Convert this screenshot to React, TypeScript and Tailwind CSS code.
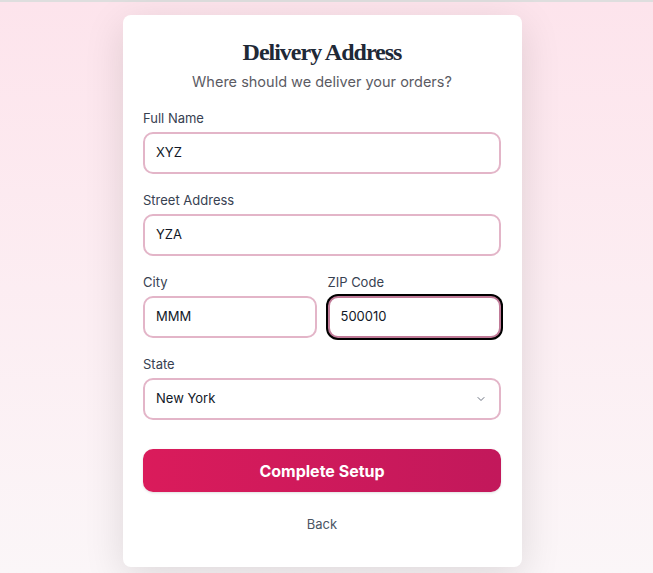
import React from "react";

function Field({ label, value, focus }: { label: string; value: string; focus?: boolean }) {
  return (
    <div className="flex flex-col">
      <label className="mb-1 text-[13px] leading-5 text-[#374151]">{label}</label>
      <div
        className={
          focus
            ? "h-[42px] rounded-[10px] border-2 border-[#c07b98] bg-white px-[11px] flex items-center text-[13px] text-[#111827] ring-2 ring-black ring-offset-0"
            : "h-[42px] rounded-[10px] border-2 border-[#e3b5c8] bg-white px-[11px] flex items-center text-[13px] text-[#111827]"
        }
      >
        {value}
      </div>
    </div>
  );
}

export default function App() {
  return (
    <div
      className="min-h-[573px] w-full border-t-2 border-[#dedede] bg-gradient-to-b from-[#fde4ec] to-[#fbf6f8] flex pl-[123px] pt-[13px]"
      style={{ fontFamily: "Inter, 'Liberation Sans', sans-serif" }}
    >
      <div className="w-[399px] h-[552px] rounded-lg bg-white shadow-[0_10px_40px_rgba(0,0,0,0.12)] pl-5 pr-[21px] pt-[21px]">
        <h1
          className="text-center text-[24px] leading-8 font-bold text-[#1f2937] tracking-[-1px]"
          style={{ fontFamily: "'Liberation Serif', 'DejaVu Serif', serif" }}
        >
          Delivery Address
        </h1>
        <p className="mt-0.5 text-center text-[14.5px] leading-6 text-[#5b5b63]">
          Where should we deliver your orders?
        </p>
        <div className="mt-[14px] flex flex-col gap-4">
          <Field label="Full Name" value="XYZ" />
          <Field label="Street Address" value="YZA" />
          <div className="grid grid-cols-2 gap-[11px]">
            <Field label="City" value="MMM" />
            <Field label="ZIP Code" value="500010" focus />
          </div>
          <div className="flex flex-col">
            <label className="mb-1 text-[13px] leading-5 text-[#374151]">State</label>
            <div className="h-[42px] rounded-[10px] border-2 border-[#e3b5c8] bg-white pl-[11px] pr-[12px] flex items-center justify-between text-[13px] text-[#111827]">
              <span>New York</span>
              <svg width="12" height="12" viewBox="0 0 24 24" fill="none" stroke="#6b7280" strokeWidth="2" strokeLinecap="round" strokeLinejoin="round">
                <path d="M6 9l6 6 6-6" />
              </svg>
            </div>
          </div>
        </div>
        <button className="mt-[29px] w-full h-[43px] rounded-[10px] bg-gradient-to-r from-[#da1b5b] to-[#c2185b] text-white text-[16px] font-bold shadow-sm">
          Complete Setup
        </button>
        <div className="mt-[22px] flex justify-center">
          <span className="text-[13px] leading-5 text-[#4b5563]">Back</span>
        </div>
      </div>
    </div>
  );
}
